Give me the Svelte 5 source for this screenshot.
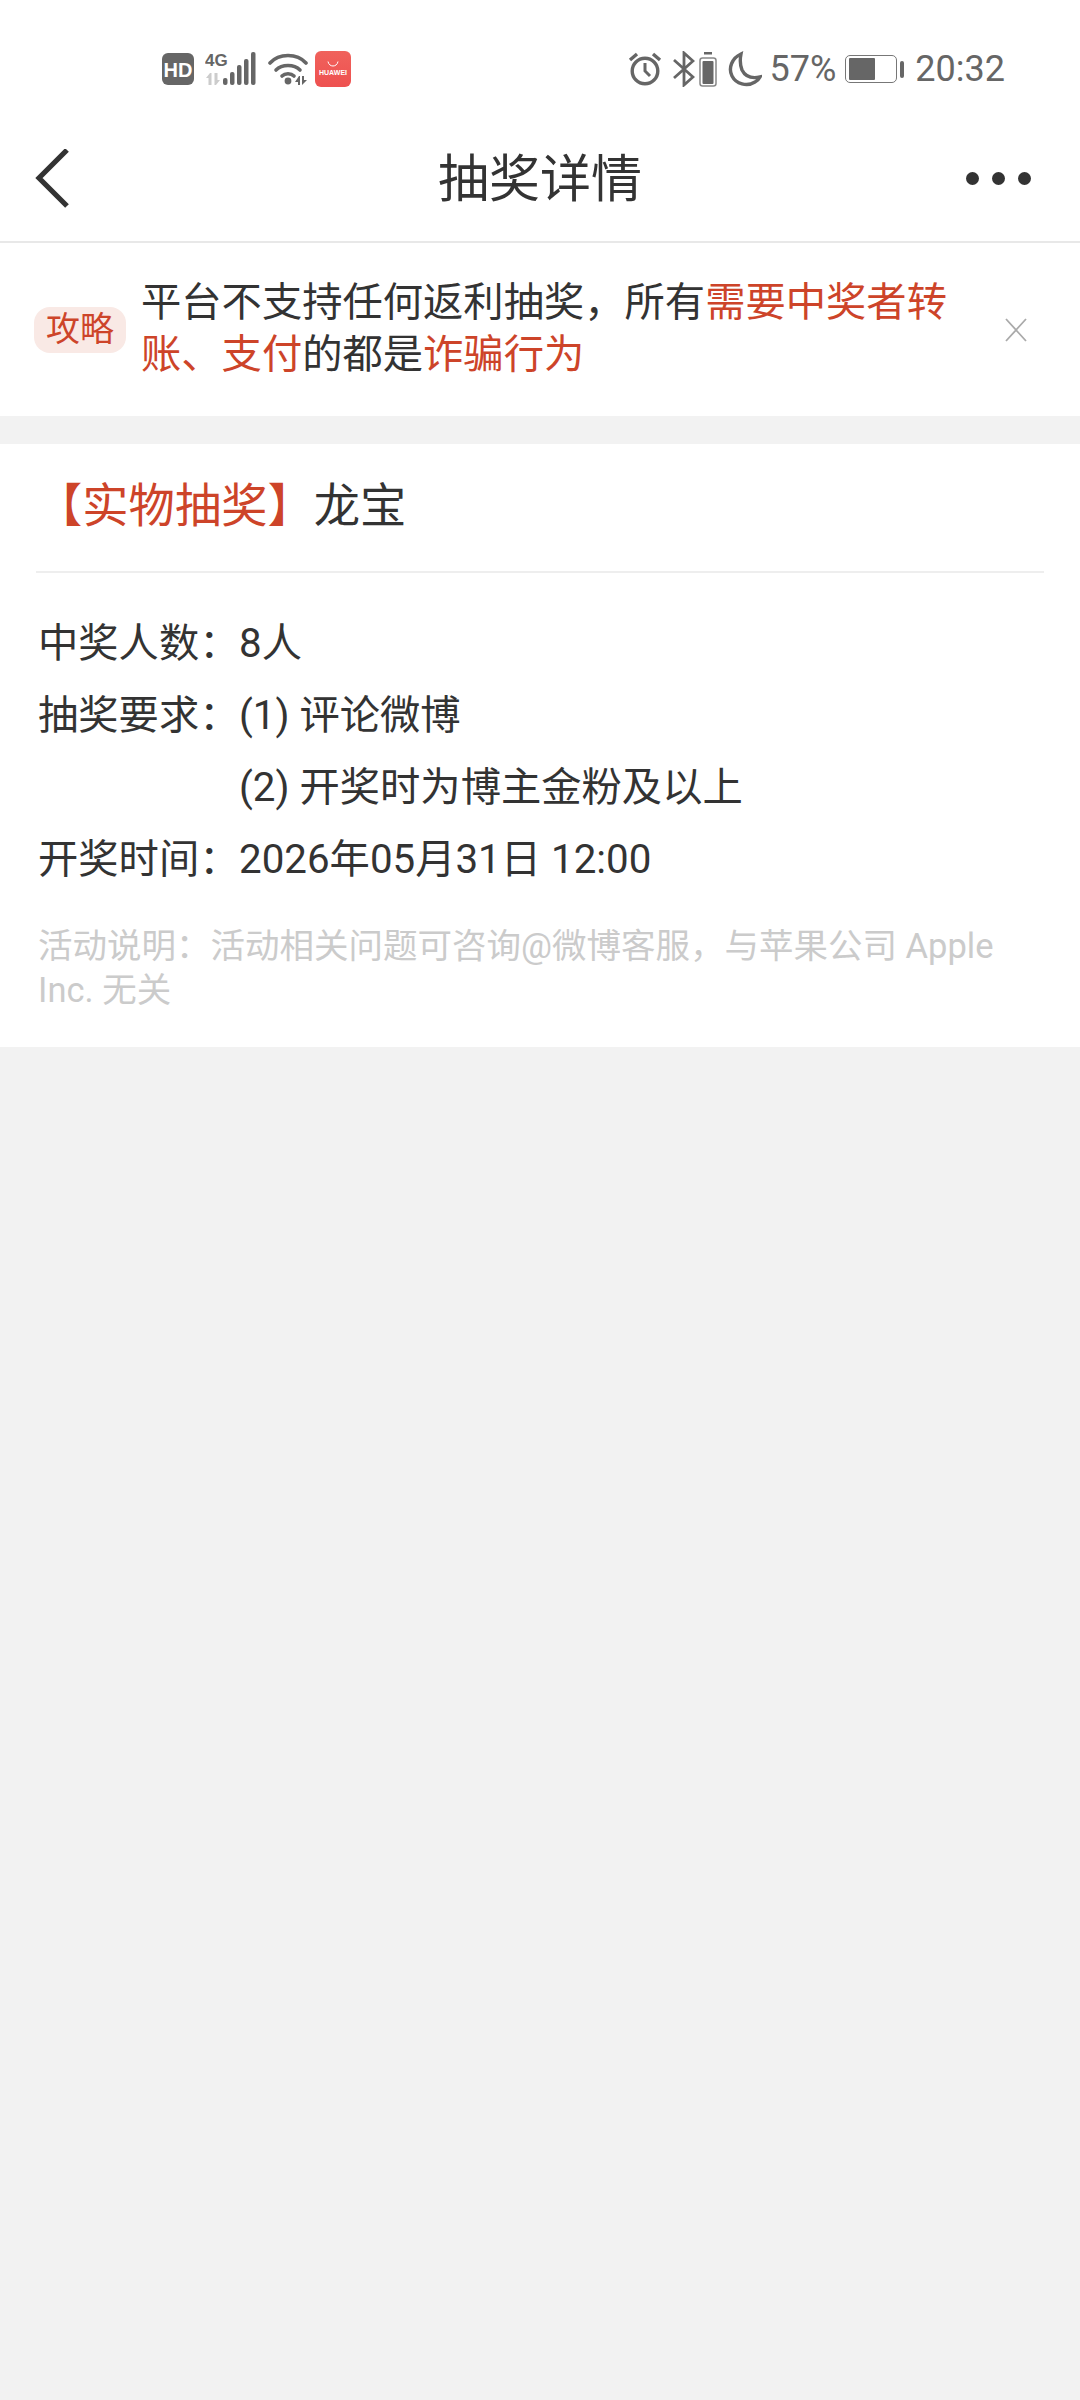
<script>
  const rows = [
    { label: '中奖人数：', lines: ['8人'] },
    { label: '抽奖要求：', lines: ['(1) 评论微博', '(2) 开奖时为博主金粉及以上'] },
    { label: '开奖时间：', lines: ['2026年05月31日 12:00'] }
  ];
</script>

<div class="page">
  <div class="status">
    <div class="left">
      <svg class="i-hd" width="32" height="32" viewBox="0 0 32 32"><rect width="32" height="32" rx="6" fill="#666"/><text x="16" y="23.500" text-anchor="middle" class="hd">HD</text></svg>
      <svg class="sig" width="52" height="34" viewBox="0 0 52 34">
        <text x="0" y="14" class="g4">4G</text>
        <path d="M5 21l-4 5h2.500v7h3V21zM11 33l4-5h-2.500v-7h-3v12z" fill="#ccc"/>
        <rect x="18" y="26" width="4.500" height="7" rx="2" fill="#666"/>
        <rect x="25" y="20" width="4.500" height="13" rx="2" fill="#666"/>
        <rect x="32" y="13" width="4.500" height="20" rx="2" fill="#666"/>
        <rect x="39" y="7" width="4.500" height="26" rx="2" fill="#666"/>
        <rect x="46" y="0" width="4.500" height="33" rx="2" fill="#666"/>
      </svg>
      <svg class="wifi" width="40" height="32" viewBox="0 0 40 32" fill="none" stroke="#666" stroke-width="3.600" stroke-linecap="round">
        <path d="M2 10C11 0 29 0 38 10"/><path d="M8 17c6-6 18-6 24 0"/><path d="M14 23c3-3 9-3 12 0"/>
        <circle cx="20" cy="28" r="3.400" fill="#666" stroke="none"/>
        <path d="M31 23l-4 6h3v3h2V23zM34 32l5-5h-3v-4h-2z" fill="#666" stroke="none"/>
      </svg>
      <div class="app"><svg width="12" height="6" viewBox="0 0 12 6" fill="none" stroke="#fff" stroke-width="1"><path d="M1 0.500c1 6 9 6 10 0"/></svg><span>HUAWEI</span></div>
    </div>
    <div class="right">
      <svg class="alarm" width="34" height="36" viewBox="0 0 34 36" fill="none" stroke="#666" stroke-width="3.400"><circle cx="17" cy="20" r="12.800"/><path d="M17 12v8l5 5" stroke-width="3"/><path d="M2 9l7-6M32 9l-7-6" stroke-width="3.400"/></svg>
      <svg class="bt" width="23" height="36" viewBox="0 0 23 36" fill="none" stroke="#666" stroke-width="2.800"><path d="M2 9l19 17-9 8V2l9 8L2 27"/></svg>
      <svg class="cell" width="18" height="36" viewBox="0 0 18 36"><rect x="5" y="1" width="8" height="2.500" fill="#666"/><rect x="1" y="7" width="16" height="28" rx="2.500" fill="none" stroke="#888" stroke-width="1.500"/><rect x="3.500" y="10" width="11" height="23" rx="1" fill="#666"/></svg>
      <svg class="moon" width="34" height="36" viewBox="0 0 34 36" fill="none" stroke="#666" stroke-width="3.400"><path d="M13 3C4 7 0 17 4 25c4 8 15 11 23 6 2-1 4-3 5-5-9 2-15-1-18-7-2-5-2-11-1-16z"/></svg>
      <span class="pct">57%</span>
      <div class="batt"><div class="shell"><div class="fill"></div></div><div class="nub"></div></div>
      <span class="time">20:32</span>
    </div>
  </div>

  <header class="nav">
    <svg class="back" width="36" height="60" viewBox="0 0 36 60" fill="none" stroke="#333" stroke-width="5.200"><path d="M33 1L5 29l28 28"/></svg>
    <h1>抽奖详情</h1>
    <div class="dots"><i></i><i></i><i></i></div>
  </header>

  <section class="banner">
    <span class="tag">攻略</span>
    <p>平台不支持任何返利抽奖，所有<em>需要中奖者转账、支付</em>的都是<em>诈骗行为</em></p>
    <svg class="close" width="24" height="24" viewBox="0 0 24 24" stroke="#aaa" stroke-width="1.800" fill="none"><path d="M2 1l20 22M22 1L2 23"/></svg>
  </section>

  <section class="card">
    <h2><em>【实物抽奖】</em>龙宝</h2>
    <div class="rows">
      {#each rows as r}
        <div class="row">
          <span class="label">{r.label}</span>
          <div class="vals">{#each r.lines as l}<div>{l}</div>{/each}</div>
        </div>
      {/each}
    </div>
    <p class="note">活动说明：活动相关问题可咨询@微博客服，与苹果公司 Apple Inc. 无关</p>
  </section>
</div>

<style>
  :global(body) { margin: 0; background: #f2f2f2; }
  .page { width: 1080px; height: 2400px; background: #f2f2f2; font-family: Roboto, "Noto Sans CJK SC", sans-serif; color: #333; overflow: hidden; }
  .status { height: 122px; background: #fff; display: flex; justify-content: space-between; align-items: flex-start; padding: 46px 75px 0 162px; box-sizing: border-box; }
  .left, .right { display: flex; align-items: center; height: 46px; }
  .left svg { flex: none; }
  .sig { margin-left: 11px; }
  .wifi { margin-left: 11px; }
  .hd { font: 900 20px "Liberation Sans", sans-serif; fill: #fff; }
  .g4 { font: 700 17px "Liberation Sans", sans-serif; fill: #666; }
  .app { width: 36px; height: 36px; border-radius: 6px; background: linear-gradient(#f0625c, #ee5150); display: flex; flex-direction: column; align-items: center; justify-content: center; gap: 2px; margin-left: 7px; }
  .app svg { display: block; }
  .app span { font: 700 7px "Liberation Sans", sans-serif; color: #fff; line-height: 8px; }
  .right { color: #666; }
  .alarm { margin-left: 3px; margin-right: 1px; }
  .bt { margin-left: 9px; }
  .cell { margin-left: 4px; }
  .moon { margin-left: 11px; }
  .pct { font-size: 36px; margin-left: 8px; }
  .batt { display: flex; align-items: center; margin-left: 9px; }
  .shell { width: 44px; height: 22px; border: 1.500px solid #777; border-radius: 5px; padding: 2px 3px; box-sizing: content-box; }
  .fill { width: 26px; height: 100%; background: #666; border-radius: 1px; }
  .nub { width: 4px; height: 17px; background: #666; border-radius: 2px; margin-left: 3px; }
  .time { font-size: 36px; margin-left: 11px; }
  .nav { height: 119px; background: #fff; border-bottom: 2px solid #e8e8e8; display: flex; align-items: center; justify-content: space-between; padding: 0 49px 0 34px; position: relative; }
  .back { margin-top: -5px; }
  h1 { margin: 0; font-size: 51px; font-weight: 400; position: absolute; left: 0; right: 0; text-align: center; line-height: 70px; top: 23px; }
  .dots { display: flex; gap: 13px; margin-top: -6px; }
  .dots i { width: 13px; height: 13px; background: #333; border-radius: 50%; }
  .banner { height: 173px; background: #fff; display: flex; align-items: center; padding: 0 34px; box-sizing: border-box; }
  .tag { width: 92px; height: 46px; flex: none; border-radius: 16px; background: #f9e9e5; color: #cd4429; font-size: 34px; line-height: 44px; text-align: center; }
  p { margin: 0; }
  .banner p { font-size: 40.300px; line-height: 52px; width: 834px; margin: -2px 0 0 15px; flex: none; }
  em { font-style: normal; color: #cd4429; }
  .close { margin-left: 29px; flex: none; }
  .card { margin-top: 28px; height: 603px; background: #fff; padding: 0 36px; box-sizing: border-box; }
  h2 { margin: 0; height: 127px; border-bottom: 2px solid #eee; font-size: 46.300px; font-weight: 400; line-height: 124px; }
  .rows { padding-top: 35px; }
  .row { display: flex; font-size: 40.300px; line-height: 72px; padding-left: 2px; }
  .label { width: 201px; flex: none; white-space: nowrap; }
  .note { margin-top: 28px; padding-left: 2px; font-size: 34.500px; line-height: 44px; color: #cbcbcb; }
</style>
